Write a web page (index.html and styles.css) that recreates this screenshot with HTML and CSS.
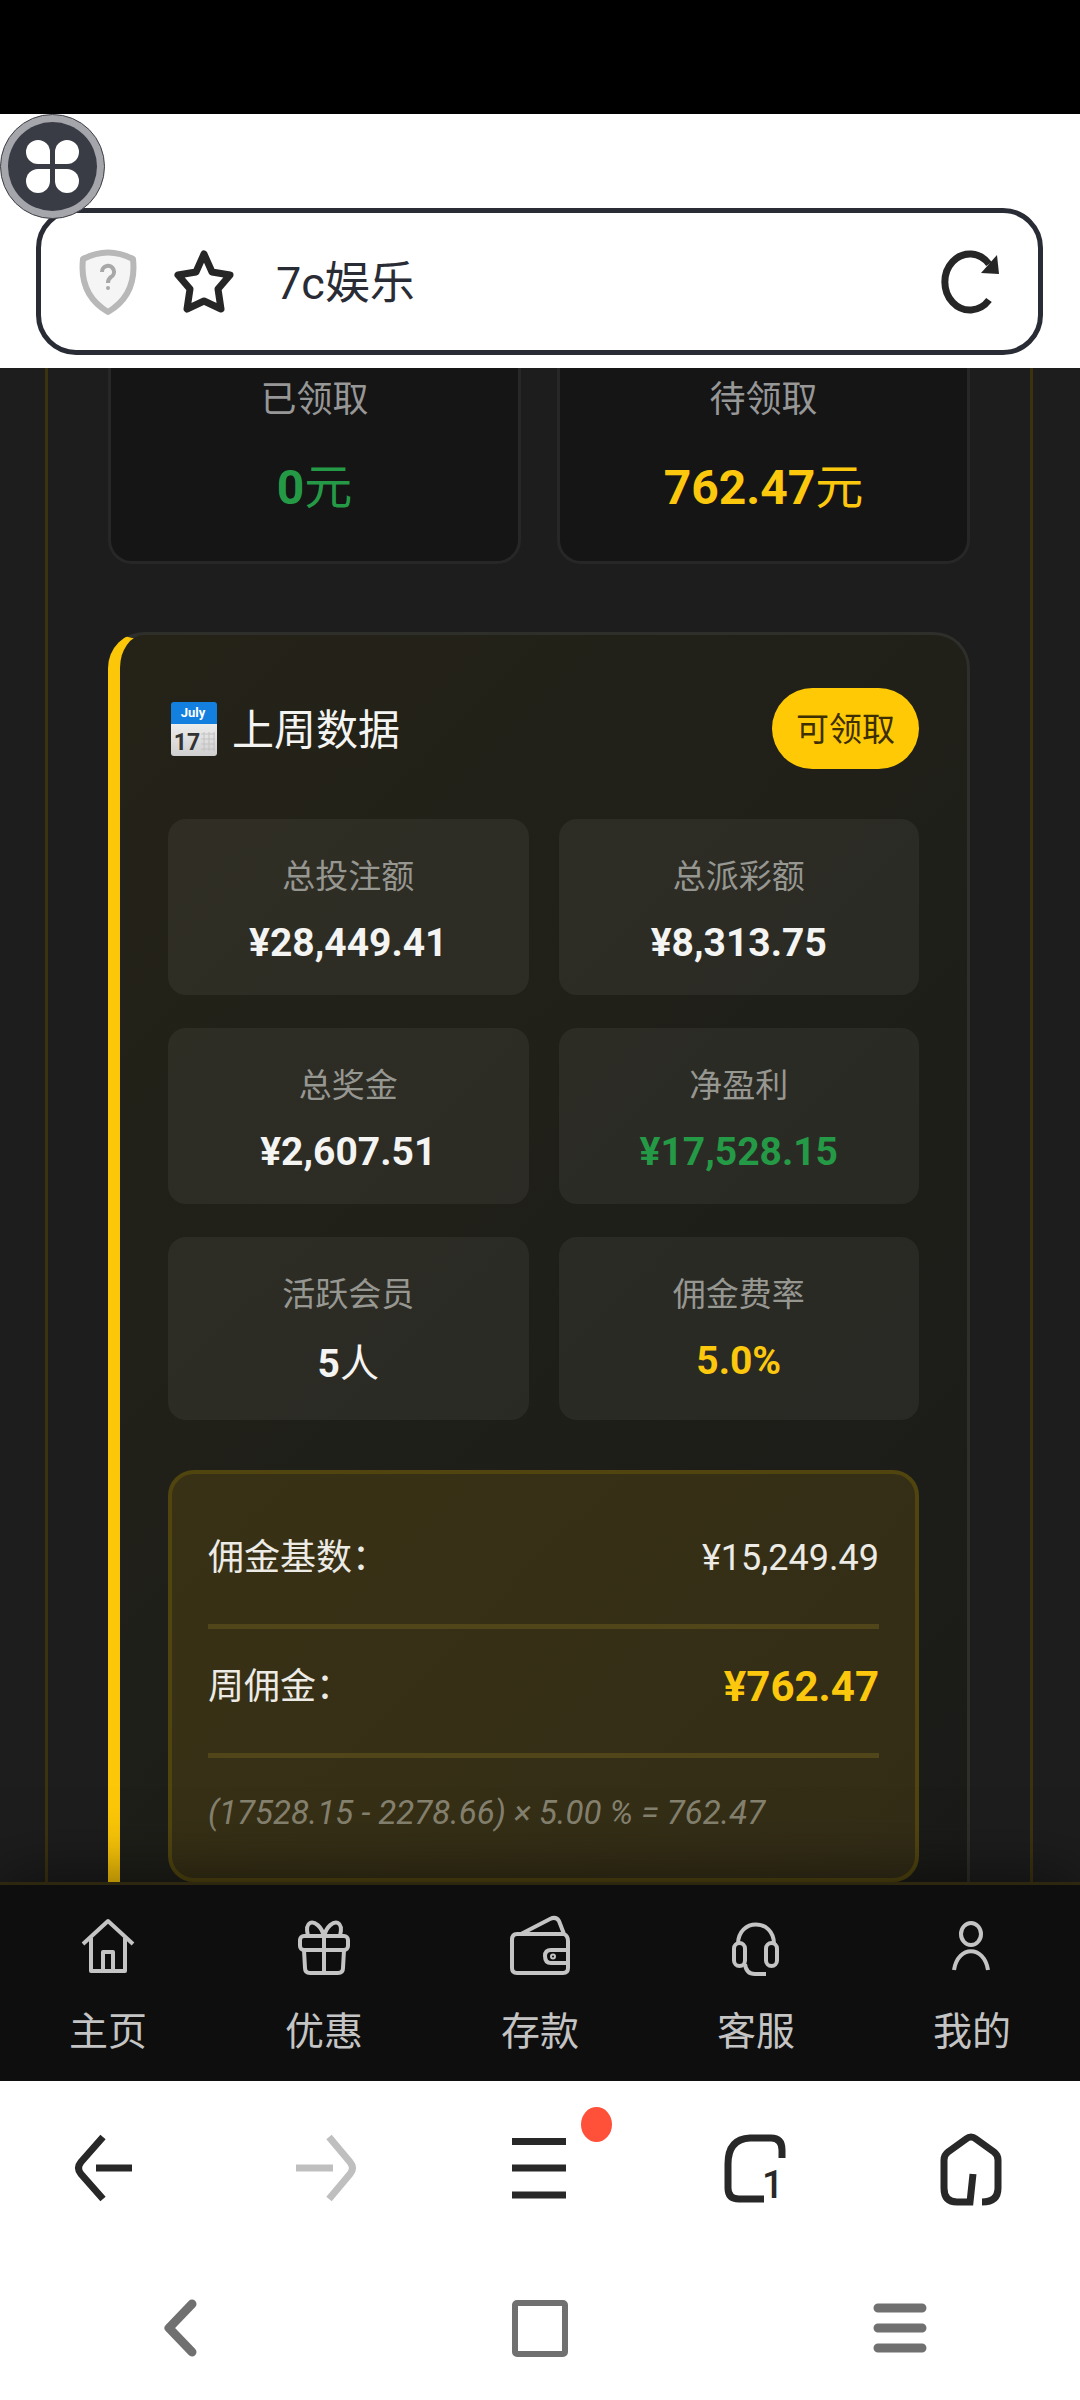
FILE: index.html
```html
<!DOCTYPE html>
<html lang="zh-CN">
<head>
<meta charset="utf-8">
<meta name="viewport" content="width=device-width, initial-scale=1">
<title>7c娱乐</title>
<link rel="stylesheet" href="styles.css">
</head>
<body>
<div class="status-bar"></div>

<header class="browser-top">
  <button class="float-button" type="button" aria-label="快捷菜单">
    <svg viewBox="0 0 105 105" width="105" height="105" aria-hidden="true">
      <circle cx="52.500" cy="52.500" r="52" fill="#a5a6ab" stroke="#3c3d44" stroke-width="1"/>
      <circle cx="52.500" cy="52.500" r="44.500" fill="#393b45"/>
      <g fill="#fff">
        <path d="M50 50H38a12 12 0 1 1 12-12z"/>
        <path d="M55 50V38a12 12 0 1 1 12 12z"/>
        <path d="M50 55V67a12 12 0 1 1-12-12z"/>
        <path d="M55 55H67a12 12 0 1 1-12 12z"/>
      </g>
    </svg>
  </button>
  <form class="address-bar">
    <button class="plain-button" type="button" aria-label="网站安全">
      <svg viewBox="0 0 64 72" width="64" height="72" aria-hidden="true">
        <path d="M7 13Q32 0 57 13C60 40 49 56 32 66C15 56 4 40 7 13z" fill="#f5f5f5" stroke="#b8b8b8" stroke-width="6" stroke-linejoin="round"/>
        <path d="M26 26a6 6 0 1 1 9 5q-3 2-3 6" fill="none" stroke="#a8a8a8" stroke-width="4"/>
        <circle cx="32" cy="42" r="2" fill="#a8a8a8"/>
      </svg>
    </button>
    <button class="plain-button" type="button" aria-label="收藏">
      <svg viewBox="0 0 64 72" width="64" height="72" aria-hidden="true">
        <path d="M32 8L40 26L58 29L46 43L49 63L32 55L15 63L18 43L6 29L24 26z" fill="none" stroke="#262626" stroke-width="7" stroke-linejoin="round"/>
      </svg>
    </button>
    <input class="address-input" type="text" value="7c娱乐" aria-label="地址栏">
    <button class="plain-button" type="button" aria-label="刷新">
      <svg viewBox="0 0 64 72" width="64" height="72" aria-hidden="true">
        <path d="M50 54A25 28 0 1 1 50 18" fill="none" stroke="#262626" stroke-width="7"/>
        <path d="M58 9L60 28L42 27z" fill="#262626"/>
      </svg>
    </button>
  </form>
</header>

<main class="page">
  <div class="panel">
    <section class="stats">
      <div class="stat-card">
        <div class="stat-label">已领取</div>
        <div class="stat-value green">0<span class="unit">元</span></div>
      </div>
      <div class="stat-card">
        <div class="stat-label">待领取</div>
        <div class="stat-value gold">762.47<span class="unit">元</span></div>
      </div>
    </section>

    <section class="week-card">
      <div class="week-head">
        <svg viewBox="0 0 46 54" width="46" height="54" aria-hidden="true">
          <defs><linearGradient id="sheet" x1="0" y1="0" x2="0" y2="1"><stop offset="0" stop-color="#fff"/><stop offset="1" stop-color="#cfcfcf"/></linearGradient></defs>
          <rect x="0" y="2" width="46" height="52" rx="3" fill="url(#sheet)"/>
          <path d="M0 22V3Q0 0 3 0H43Q46 0 46 3V22z" fill="#1380e0"/>
          <path d="M30 32H44M30 37H44M30 42H44M30 47H44M33 30V49M38 30V49M43 30V49" stroke="#c2c2c2" stroke-width="1"/>
          <text x="22" y="15" class="cal-month">July</text>
          <text x="16" y="48" class="cal-day">17</text>
        </svg>
        <h2 class="week-title">上周数据</h2>
        <button class="claim" type="button">可领取</button>
      </div>

      <div class="tiles">
        <div class="tile"><div class="tile-label">总投注额</div><div class="tile-value">¥28,449.41</div></div>
        <div class="tile"><div class="tile-label">总派彩额</div><div class="tile-value">¥8,313.75</div></div>
        <div class="tile"><div class="tile-label">总奖金</div><div class="tile-value">¥2,607.51</div></div>
        <div class="tile"><div class="tile-label">净盈利</div><div class="tile-value green">¥17,528.15</div></div>
        <div class="tile"><div class="tile-label">活跃会员</div><div class="tile-value people">5<span class="unit">人</span></div></div>
        <div class="tile"><div class="tile-label">佣金费率</div><div class="tile-value gold">5.0%</div></div>
      </div>

      <div class="summary">
        <div class="summary-row"><span>佣金基数：</span><span>¥15,249.49</span></div>
        <div class="summary-row"><span>周佣金：</span><strong class="total gold">¥762.47</strong></div>
        <p class="formula">(17528.15 - 2278.66) × 5.00 % = 762.47</p>
      </div>
    </section>
  </div>
</main>

<nav class="tabbar">
  <a class="tab" href="#home">
    <svg viewBox="0 0 60 64" width="60" height="64" aria-hidden="true"><path d="M5 30L30 7L55 30M13 24V57H47V24M25 57V38H35V57"/></svg>
    <span>主页</span>
  </a>
  <a class="tab" href="#promo">
    <svg viewBox="0 0 60 64" width="60" height="64" aria-hidden="true"><rect x="6" y="22" width="48" height="14" rx="4"/><path d="M10 36L11 54Q11 59 16 59H44Q49 59 49 54L50 36M30 22V59M30 23C28 12 20 7 16 9C12 11 13 18 14 22M30 23C32 12 40 7 44 9C48 11 47 18 46 22"/></svg>
    <span>优惠</span>
  </a>
  <a class="tab" href="#deposit">
    <svg viewBox="0 0 60 64" width="60" height="64" aria-hidden="true"><path d="M54 20H7Q2 20 2 26V54Q2 59 7 59H53Q58 59 58 54V27Q58 22 54 20L49 7Q46 2 40 5L11 20M58 36H41Q35 36 35 42Q35 49 41 49H58"/><circle cx="43" cy="42.500" r="1"/></svg>
    <span>存款</span>
  </a>
  <a class="tab" href="#service">
    <svg viewBox="0 0 60 64" width="60" height="64" aria-hidden="true"><path d="M12 30C12 4 48 4 48 30M19 50Q20 60 29 60H40"/><rect x="8" y="29" width="11" height="23" rx="5.500"/><rect x="40" y="29" width="11" height="23" rx="5.500"/></svg>
    <span>客服</span>
  </a>
  <a class="tab" href="#mine">
    <svg viewBox="0 0 60 64" width="60" height="64" aria-hidden="true"><ellipse cx="29" cy="20" rx="10" ry="11"/><path d="M12 56C16 31 42 31 46 56"/></svg>
    <span>我的</span>
  </a>
</nav>

<div class="browser-tools">
  <button class="plain-button" type="button" aria-label="后退">
    <svg viewBox="0 0 80 80" width="80" height="80" aria-hidden="true"><path d="M35 9L13 34Q8 40 13 46L35 71M28 40H64"/></svg>
  </button>
  <button class="plain-button forward" type="button" aria-label="前进">
    <svg viewBox="0 0 80 80" width="80" height="80" aria-hidden="true"><path d="M45 9L66 34Q71 40 66 46L45 71M12 40H49"/></svg>
  </button>
  <button class="plain-button has-dot" type="button" aria-label="菜单">
    <svg viewBox="0 0 80 80" width="80" height="80" aria-hidden="true"><path d="M12 13.500H66M12 40H66M12 67H66"/></svg>
    <span class="dot"></span>
  </button>
  <button class="plain-button" type="button" aria-label="标签页">
    <svg viewBox="0 0 80 80" width="80" height="80" aria-hidden="true"><path d="M66 30V22Q66 10 55 10H34Q12 11 12 36V60Q12 71 23 71H48"/><text x="46" y="70" class="tab-count">1</text></svg>
  </button>
  <button class="plain-button" type="button" aria-label="浏览器主页">
    <svg viewBox="0 0 80 80" width="80" height="80" aria-hidden="true"><path d="M50 74Q66 74 66 60V32Q66 27 62 24L44 11Q39 7 34 11L16 24Q12 27 12 32V60Q12 74 25 74H38L41 46"/></svg>
  </button>
</div>

<div class="system-nav">
  <button class="plain-button" type="button" aria-label="返回">
    <svg viewBox="0 0 60 60" width="60" height="60" aria-hidden="true"><path d="M42 6L19 30L42 54" stroke-width="9" stroke-linecap="round" stroke-linejoin="round"/></svg>
  </button>
  <button class="plain-button" type="button" aria-label="主屏幕">
    <svg viewBox="0 0 60 60" width="60" height="60" aria-hidden="true"><rect x="5" y="5" width="50" height="51" rx="2" stroke-width="6"/></svg>
  </button>
  <button class="plain-button" type="button" aria-label="最近任务">
    <svg viewBox="0 0 60 60" width="60" height="60" aria-hidden="true"><path d="M8 10H52M8 30H52M8 50H52" stroke-width="9" stroke-linecap="round"/></svg>
  </button>
</div>
</body>
</html>
```

FILE: styles.css
```css
* {
  box-sizing: border-box;
}

body {
  margin: 0;
  min-height: 100vh;
  display: flex;
  flex-direction: column;
  background: #fff;
  font-family: Roboto, "Noto Sans CJK SC", sans-serif;
}

svg {
  display: block;
}

.plain-button {
  display: flex;
  align-items: center;
  justify-content: center;
  padding: 0;
  border: 0;
  background: none;
}

.green { color: #259a46; }
.gold { color: #fcc80e; }
.unit { font-weight: 400; }

/* Browser chrome, top */
.status-bar {
  height: 114px;
  background: #000;
}

.browser-top {
  position: relative;
  padding: 94px 37px 13px 36px;
  background: #fff;
}

.float-button {
  position: absolute;
  left: 0;
  top: 0;
  padding: 0;
  border: 0;
  background: none;
}

.address-bar {
  display: flex;
  align-items: center;
  gap: 32px;
  height: 147px;
  padding: 0 35px;
  border: 5px solid #2a2c35;
  border-radius: 40px;
}

.address-input {
  flex: 1;
  min-width: 0;
  padding: 4px 8px 0;
  border: 0;
  outline: 0;
  background: none;
  color: #2a2c35;
  font: 400 45px/64px Roboto, "Noto Sans CJK SC", sans-serif;
}

/* Page */
.page {
  flex: 1;
  padding: 0 47px 0 45px;
  background: #1d1d1d;
}

.panel {
  height: 100%;
  padding: 0 60px;
  border: solid #3d3210;
  border-width: 0 3px;
}

.stats {
  display: grid;
  grid-template-columns: 1fr 1fr;
  gap: 36px;
}

.stat-card {
  padding: 6px 20px 41px;
  border: 3px solid #272727;
  border-top: 0;
  border-radius: 0 0 24px 24px;
  background: #151515;
  text-align: center;
}

.stat-label {
  color: #979797;
  font-size: 36px;
  line-height: 52px;
}

.stat-value {
  margin-top: 30px;
  font-size: 48px;
  font-weight: 700;
  line-height: 64px;
}

.week-card {
  margin-top: 68px;
  padding: 53px 48px 0;
  border: 3px solid #2e2e2a;
  border-left: 12px solid #fcc708;
  border-bottom: 0;
  border-radius: 36px 36px 0 0;
  background: linear-gradient(135deg, #252318, #1f1f19 50%, #1a1b18);
}

.week-head {
  display: flex;
  align-items: center;
  height: 81px;
  padding-left: 3px;
}

.cal-month {
  fill: #fff;
  font: 700 13px Roboto, sans-serif;
  text-anchor: middle;
}

.cal-day {
  fill: #333;
  font: 700 23px Roboto, sans-serif;
  text-anchor: middle;
}

.week-title {
  flex: 1;
  margin: 0 0 0 15px;
  padding-top: 4px;
  color: #f4f4f2;
  font-size: 42px;
  font-weight: 400;
  line-height: 60px;
}

.claim {
  height: 81px;
  padding: 2px 24px 0;
  border: 0;
  border-radius: 41px;
  background: #ffca05;
  color: #3d2f00;
  font: 400 33px/48px Roboto, "Noto Sans CJK SC", sans-serif;
}

.tiles {
  display: grid;
  grid-template-columns: 1fr 1fr;
  gap: 33px 30px;
  margin-top: 50px;
}

.tile {
  padding: 32px 16px 28px;
  border-radius: 18px;
  background: rgba(255, 255, 255, 0.055);
  text-align: center;
}

.tile-label {
  color: #979792;
  font-size: 33px;
  line-height: 52px;
}

.tile-value {
  margin-top: 16px;
  color: #f4f4f2;
  font-size: 39px;
  font-weight: 700;
  line-height: 48px;
}

.tile-value.green { color: #259a46; }
.tile-value.gold { color: #fcc80e; }
.tile-value.people { line-height: 55px; }

.summary {
  margin-top: 50px;
  padding: 26px 36px 38px;
  border: 4px solid #51450f;
  border-radius: 26px;
  background: linear-gradient(135deg, #383115, #332d17);
  color: #ecebe5;
  font-size: 36px;
}

.summary-row {
  display: flex;
  align-items: center;
  justify-content: space-between;
  padding: 30px 0 38px;
  border-bottom: 5px solid #51461a;
  line-height: 56px;
}

.total {
  font-size: 42px;
}

.formula {
  margin: 0;
  padding-top: 28px;
  color: #85816f;
  font-size: 33px;
  font-style: italic;
  line-height: 54px;
}

/* Site tab bar */
.tabbar {
  position: relative;
  display: flex;
  height: 199px;
  padding-top: 29px;
  border-top: 3px solid #2d270f;
  background: #0e0e0e;
  box-shadow: 0 -6px 60px rgba(0, 0, 0, 0.5);
}

.tab {
  flex: 1;
  display: flex;
  flex-direction: column;
  align-items: center;
  gap: 27px;
  color: #c4c4c4;
  font-size: 39px;
  line-height: 54px;
  text-decoration: none;
}

.tab svg {
  fill: none;
  stroke: #c4c4c4;
  stroke-width: 4;
  stroke-linejoin: round;
}

/* Browser chrome, bottom */
.browser-tools {
  position: relative;
  display: flex;
  height: 174px;
  background: #fff;
}

.browser-tools .plain-button {
  flex: 1;
}

.browser-tools svg {
  fill: none;
  stroke: #282828;
  stroke-width: 7;
}

.browser-tools .forward svg {
  stroke: #bfbfbf;
}

.has-dot {
  position: relative;
}

.dot {
  position: absolute;
  left: calc(50% + 41px);
  top: 26px;
  width: 31px;
  height: 35px;
  border-radius: 50%;
  background: #ff513a;
}

.browser-tools .tab-count {
  fill: #282828;
  stroke: none;
  font: 500 38px Roboto, sans-serif;
}

.system-nav {
  display: flex;
  height: 146px;
  background: #fff;
}

.system-nav .plain-button {
  flex: 1;
}

.system-nav svg {
  fill: none;
  stroke: #707070;
}
```
